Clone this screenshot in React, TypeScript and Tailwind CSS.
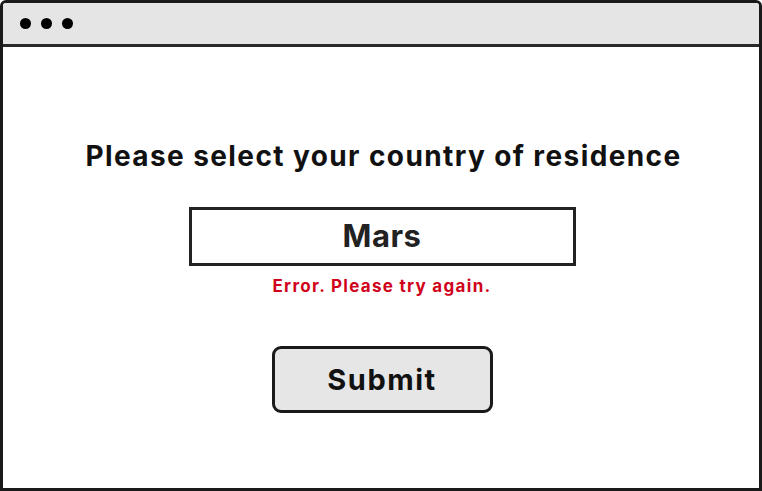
export default function App() {
  return (
    <div className="w-[762px] h-[491px] bg-white" style={{ fontFamily: '"Inter", "Noto Sans", sans-serif' }}>
      <div className="w-full h-full border-[3px] border-[#1a1a1a] rounded-t-[6px] flex flex-col overflow-hidden">
        <div className="h-[44px] bg-[#e5e5e5] border-b-[3px] border-[#2a2a2a] flex items-center gap-[10px] pl-[17px] shrink-0">
          <span className="w-[11px] h-[11px] rounded-full bg-black" />
          <span className="w-[11px] h-[11px] rounded-full bg-black" />
          <span className="w-[11px] h-[11px] rounded-full bg-black" />
        </div>
        <div className="flex-1 flex flex-col items-center pt-[89px]">
          <h1 className="text-[28px] leading-[40px] font-bold text-[#111] tracking-[1.4px] ml-[5px]">Please select your country of residence</h1>
          <div className="mt-[31px] ml-[2px] w-[387px] h-[59px] border-[3px] border-[#222] flex items-center justify-center">
            <span className="text-[31px] font-bold text-[#222] tracking-[0.5px]">Mars</span>
          </div>
          <div className="mt-[8px] ml-[2px] text-[17px] leading-[24px] font-bold text-[#d0021b] tracking-[1.3px]">Error. Please try again.</div>
          <button className="mt-[48px] ml-[2px] w-[221px] h-[67px] rounded-[9px] border-[3px] border-[#1a1a1a] bg-[#e6e6e6] text-[29px] font-bold text-[#111] tracking-[1.5px] flex items-center justify-center">
            Submit
          </button>
        </div>
      </div>
    </div>
  );
}
